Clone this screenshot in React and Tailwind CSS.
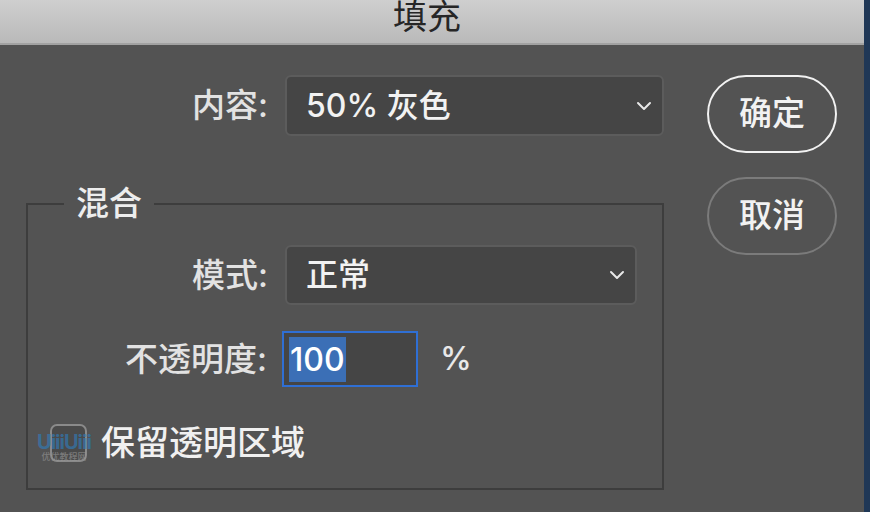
// Photoshop "填充" (Fill) dialog, dark theme
import React from 'react';

const FONT = { fontFamily: 'Inter, "Noto Sans CJK SC", sans-serif' };

function Chevron() {
  return (
    <svg width="16" height="10" viewBox="0 0 16 10" fill="none">
      <path d="M2 2l6 6 6-6" stroke="#e8e8e8" strokeWidth="2" strokeLinecap="round" strokeLinejoin="round" />
    </svg>
  );
}

function Select({ value, width, height }) {
  return (
    <div
      className="flex items-center justify-between rounded-[6px] border-2 border-[#5c5c5c] bg-[#454545] pl-[19px] pr-[10px] text-[32px] text-[#f2f2f2]"
      style={{ width, height }}
    >
      <span className="leading-none">{value}</span>
      <Chevron />
    </div>
  );
}

function Label({ children, width }) {
  return (
    <div className="shrink-0 text-right text-[33px] leading-none text-[#e2e2e2]" style={{ width }}>
      {children}
    </div>
  );
}

export default function App() {
  return (
    <div className="flex h-[512px] w-[870px] bg-[#535353] font-medium" style={FONT}>
      <div className="flex flex-1 flex-col">
        {/* ── title bar ── */}
        <div className="flex h-[45px] items-center justify-center border-b-2 border-[#a2a2a2] bg-gradient-to-b from-[#cfcfcf] to-[#b9b9b9]">
          <span className="mr-[10px] mt-[-10px] text-[34px] font-normal leading-none text-[#262626]">填充</span>
        </div>

        {/* ── body ── */}
        <div className="flex flex-1 pt-[30px]">
          <div className="flex w-[664px] flex-col pl-[26px]">
            <div className="flex items-center">
              <Label width={242}>内容:</Label>
              <div className="ml-[17px]">
                <Select value="50% 灰色" width={379} height={61} />
              </div>
            </div>

            <fieldset className="mt-[52px] h-[302px] border-2 border-[#3d3d3d]">
              <legend className="ml-[36px] px-[12px] text-[33px] leading-[31px] text-[#ededed]">混合</legend>

              <div className="mt-[26px] flex items-center">
                <Label width={240}>模式:</Label>
                <div className="ml-[17px]">
                  <Select value="正常" width={352} height={60} />
                </div>
              </div>

              <div className="mt-[26px] flex items-center">
                <Label width={239}>不透明度:</Label>
                <div className="ml-[15px] flex h-[56px] w-[136px] items-center border-2 border-[#2f6fd4] bg-[#454545] pl-[5px]">
                  <span className="bg-[#3b6fb6] px-[1px] text-[32px] leading-[45px] text-white">100</span>
                </div>
                <span className="ml-[22px] text-[32px] leading-none text-[#e8e8e8]">%</span>
              </div>

              <div className="relative mt-[37px] flex items-center pl-[22px]">
                <div className="h-[38px] w-[37px] rounded-[7px] border-2 border-[#8a8a8a] bg-[#4a4a4a]" />
                <span className="ml-[14px] text-[34px] leading-none text-[#f0f0f0]">保留透明区域</span>
                {/* site watermark over the checkbox */}
                <div className="pointer-events-none absolute left-[9px] top-[8px] flex flex-col items-center opacity-60">
                  <span className="text-[20px] font-bold leading-none tracking-tighter text-[#2e7fc0]">UiiiUiii</span>
                  <span className="text-[9px] leading-none text-[#9a9a9a]">优优教程网</span>
                </div>
              </div>
            </fieldset>
          </div>

          {/* ── buttons ── */}
          <div className="ml-[43px] flex w-[130px] flex-col gap-[24px]">
            <button className="flex h-[78px] items-center justify-center rounded-full border-2 border-[#f2f2f2] text-[33px] text-[#f2f2f2]">
              确定
            </button>
            <button className="flex h-[78px] items-center justify-center rounded-full border-2 border-[#7b7b7b] text-[33px] text-[#f2f2f2]">
              取消
            </button>
          </div>
        </div>
      </div>

      <div className="w-[6px] bg-[#1f3756]" />
    </div>
  );
}
